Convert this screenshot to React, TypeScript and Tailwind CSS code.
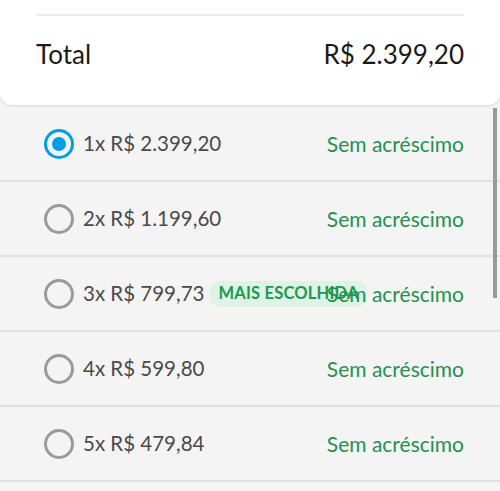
import React from "react";

const rows = [
  { n: "1x", v: "R$ 2.399,20", checked: true },
  { n: "2x", v: "R$ 1.199,60" },
  { n: "3x", v: "R$ 799,73", badge: true },
  { n: "4x", v: "R$ 599,80" },
  { n: "5x", v: "R$ 479,84" },
];

function Radio({ checked }: { checked?: boolean }) {
  if (checked)
    return (
      <div className="w-[30px] h-[30px] rounded-full border-[3px] border-[#009ee3] flex items-center justify-center shrink-0">
        <div className="w-[14px] h-[14px] rounded-full bg-[#009ee3]" />
      </div>
    );
  return <div className="w-[30px] h-[30px] rounded-full border-[3px] border-[#9a9a9a] shrink-0" />;
}

export default function App() {
  return (
    <div
      className="relative w-[500px] h-[491px] overflow-hidden bg-[#f4f4f4]"
      style={{ fontFamily: "Lato, 'Open Sans', sans-serif" }}
    >
      <div className="bg-white h-[105px] rounded-b-[12px] shadow-[0_1px_3px_rgba(0,0,0,0.12)] px-[36px] relative z-10">
        <div className="pt-[14px]">
          <div className="h-[2px] bg-[#ebebeb]" />
        </div>
        <div className="flex items-center justify-between mt-[25px] text-[26px] text-[#1a1a1a] leading-none">
          <span>Total</span>
          <span>R$ 2.399,20</span>
        </div>
      </div>
      <div className="mt-[2px]">
        {rows.map((r, i) => (
          <div
            key={i}
            className="h-[75px] border-b-[2px] border-[#e0e0e0] flex items-center pl-[44px] pr-[36px]"
          >
            <Radio checked={r.checked} />
            <div className="flex-1 min-w-0 flex items-center ml-[9px] whitespace-nowrap">
              <span className="text-[20.5px] text-[#4a4a4a]">
                {r.n} {r.v}
              </span>
              {r.badge && (
                <span className="ml-[6px] h-[26px] px-[8px] rounded-[10px] bg-[#dff2e6] text-[#1a9a50] text-[16.5px] font-bold flex items-center tracking-[0.2px]">
                  MAIS ESCOLHIDA
                </span>
              )}
            </div>
            <span className="shrink-0 text-[21px] text-[#23914f] whitespace-nowrap relative">
              Sem acréscimo
            </span>
          </div>
        ))}
      </div>
      <div className="absolute left-[493px] top-[108px] w-[4px] h-[190px] bg-[#9a9a9a]" />
    </div>
  );
}
